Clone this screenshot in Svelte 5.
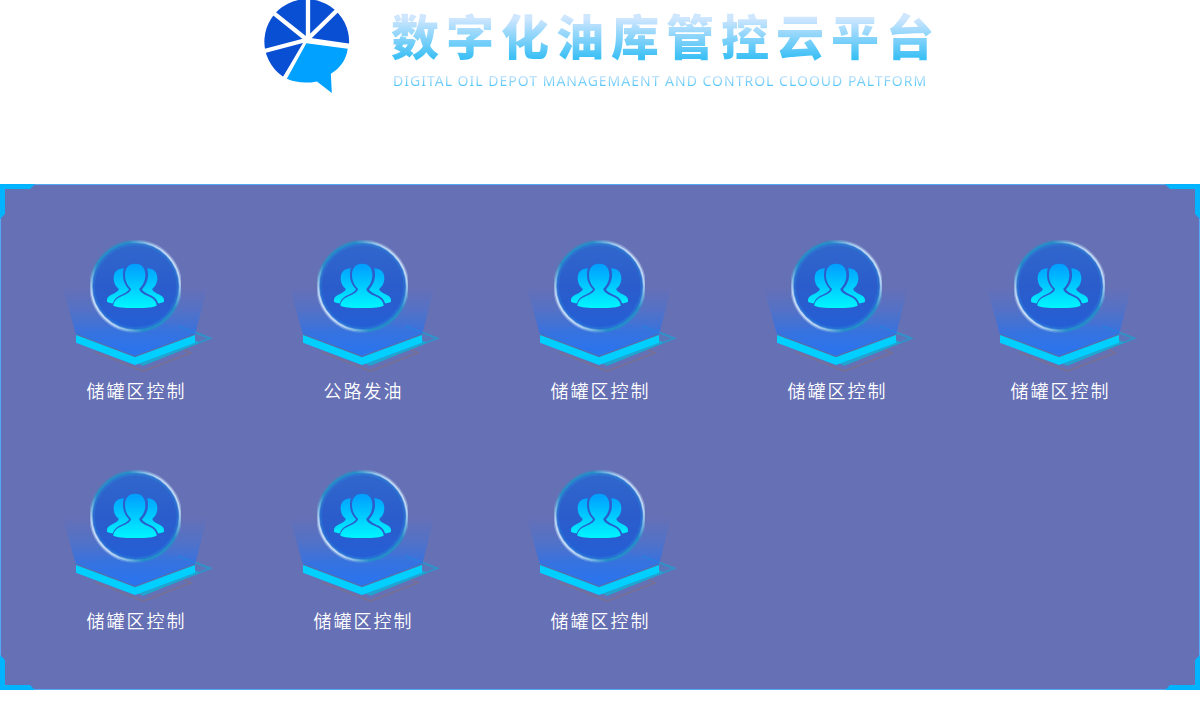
<script>
  const modules = [
    '储罐区控制', '公路发油', '储罐区控制', '储罐区控制', '储罐区控制',
    '储罐区控制', '储罐区控制', '储罐区控制'
  ];
</script>

<svelte:head><title>数字化油库管控云平台</title></svelte:head>

<svg class="defs" width="0" height="0" aria-hidden="true">
  <defs>
    <linearGradient id="beam" x1="0" y1="0" x2="0" y2="1">
      <stop offset="0" stop-color="#2b72ee" stop-opacity="0" />
      <stop offset=".3" stop-color="#2f74e6" stop-opacity=".3" />
      <stop offset=".65" stop-color="#2b72ea" stop-opacity=".78" />
      <stop offset="1" stop-color="#2874f2" />
    </linearGradient>
    <linearGradient id="disc" x1="0" y1="0" x2="0" y2="1">
      <stop offset="0" stop-color="#3068cc" />
      <stop offset=".5" stop-color="#2b5ccb" />
      <stop offset="1" stop-color="#245fd6" />
    </linearGradient>
    <linearGradient id="ring" x1="0" y1=".85" x2="1" y2=".15">
      <stop offset="0" stop-color="#e4eefc" />
      <stop offset=".14" stop-color="#b4d2f4" />
      <stop offset=".32" stop-color="#2391c8" />
      <stop offset=".68" stop-color="#2391c8" />
      <stop offset=".86" stop-color="#b4d2f4" />
      <stop offset="1" stop-color="#e4eefc" />
    </linearGradient>
    <linearGradient id="people" gradientUnits="userSpaceOnUse" x1="0" y1="101" x2="0" y2="234">
      <stop offset="0" stop-color="#009dff" />
      <stop offset="1" stop-color="#00f6ff" />
    </linearGradient>
    <clipPath id="discClip"><rect x="90" y="28" width="273" height="282" /></clipPath>
    <symbol id="module" viewBox="-12 15 480 420">
      <path d="M48 318 250 262 455 325 250 407Z" fill="#2e8bd0" fill-opacity=".2" />
      <path d="M355 288 451 325 250 403" fill="none" stroke="#1e9fd0" stroke-width="6" stroke-opacity=".7" />
      <path d="M225 397 250 407 420 338 405 330Z" fill="#1ca9d2" fill-opacity=".85" />
      <path d="M105 366 250 423 393 368 372 360" fill="none" stroke="#777094" stroke-width="5" />
      <path d="M8 172H442L405 314 225 381 48 314Z" fill="url(#beam)" />
      <path d="M48 313 225 379 405 313" fill="none" stroke="#58709e" stroke-width="3" />
      <path d="M48 315 225 382 405 315V338L225 405 48 338Z" fill="#00cfff" />
      <g clip-path="url(#discClip)">
        <circle cx="227" cy="169" r="134" fill="url(#disc)" />
        <circle cx="227" cy="169" r="127" fill="none" stroke="#2b91da" stroke-width="9" stroke-opacity=".3" />
        <circle cx="227" cy="169" r="134" fill="none" stroke="url(#ring)" stroke-width="11" stroke-opacity=".4" />
        <circle cx="227" cy="169" r="133" fill="none" stroke="url(#ring)" stroke-width="5" />
      </g>
      <g fill="url(#people)">
        <path d="M192 115c-20 0-31 12-31 29 0 14 6 26 15 32 1 6-8 11-19 17-10 5-16 10-16 16v6c5 3 11 4 18 5 3-14 14-21 30-28 9-4 15-8 18-14-13-13-19-31-18-45 0-8 1-14 3-18Z" />
        <path d="M261 115c20 0 31 12 31 29 0 14-6 26-15 32-1 6 8 11 19 17 10 5 16 10 16 16v6c-5 3-11 4-18 5-3-14-14-21-30-28-9-4-15-8-18-14 13-13 19-31 18-45 0-8-1-14-3-18Z" />
        <path d="M226 101c-21 0-31 14-31 34 0 17 7 32 18 41 0 9-12 15-27 22-16 7-25 15-26 29 10 5 29 7 66 7s54-2 64-7c-1-14-10-22-26-29-15-7-26-13-26-22 11-9 18-24 18-41 0-20-10-34-30-34Z" />
      </g>
    </symbol>
  </defs>
</svg>

<header>
  <svg class="logo" viewBox="15 0 290 290" aria-hidden="true">
    <path d="M160 118 287 133A128 128 0 1 0 88 232Z" fill="#094fd3" />
    <path d="M163 118V-10M160 120 50 32M160 120 258 24M160 120 20 157M160 120 300 140M160 122 86 248" stroke="#fff" stroke-width="13" fill="none" />
    <path d="M158 131 283 147Q277 194 232 223L235 281 190 246Q140 256 99 238Z" fill="#00a1ff" />
  </svg>
  <div class="brand">
    <h1>数字化油库管控云平台</h1>
    <p>DIGITAL OIL DEPOT MANAGEMAENT AND CONTROL CLOOUD PALTFORM</p>
  </div>
</header>

<main>
  <svg class="corner tl" viewBox="0 0 35 35" aria-hidden="true"><path d="M0 0H35L30 5H5V30L0 35Z" /></svg>
  <svg class="corner tr" viewBox="0 0 35 35" aria-hidden="true"><path d="M0 0H35L30 5H5V30L0 35Z" /></svg>
  <svg class="corner bl" viewBox="0 0 35 35" aria-hidden="true"><path d="M0 0H35L30 5H5V30L0 35Z" /></svg>
  <svg class="corner br" viewBox="0 0 35 35" aria-hidden="true"><path d="M0 0H35L30 5H5V30L0 35Z" /></svg>
  <nav>
    {#each modules as name}
      <a href="#module">
        <svg class="art" aria-hidden="true"><use href="#module" /></svg>
        <span>{name}</span>
      </a>
    {/each}
  </nav>
</main>

<style>
  :global(body) {
    margin: 0;
    background: #fff;
    font-family: "Noto Sans CJK SC", sans-serif;
  }
  .defs { position: absolute; }
  header {
    display: flex;
    justify-content: center;
    gap: 36px;
    height: 184px;
  }
  .logo { width: 96px; height: 96px; flex: none; }
  .brand { padding-top: 6px; }
  h1, p {
    margin: 0;
    white-space: nowrap;
    color: transparent;
    -webkit-background-clip: text;
    background-clip: text;
  }
  h1 {
    font-size: 48px;
    font-weight: 900;
    line-height: 56px;
    letter-spacing: 7px;
    background-image: linear-gradient(#cfe6ff 22%, #3dc0f5 92%);
  }
  p {
    padding: 9px 0 0 2px;
    font-family: "Noto Sans", "Open Sans", sans-serif;
    font-size: 14px;
    line-height: 20px;
    letter-spacing: 1px;
    background-image: linear-gradient(#cfe6ff 45%, #3dc0f5 88%);
  }
  main {
    position: relative;
    background: #6670b5;
    border: 1px solid #55a8f5;
  }
  .corner {
    position: absolute;
    width: 35px;
    height: 35px;
    fill: #00b4ff;
  }
  .tl { top: -1px; left: -1px; }
  .tr { top: -1px; right: -1px; transform: scaleX(-1); }
  .bl { bottom: -1px; left: -1px; transform: scaleY(-1); }
  .br { bottom: -1px; right: -1px; transform: scale(-1); }
  nav {
    display: grid;
    grid-template-columns: 217fr 237fr 237fr 237fr 209fr;
    row-gap: 63px;
    padding: 50px 35px 57px 26px;
  }
  a {
    display: flex;
    flex-direction: column;
    align-items: center;
    gap: 3px;
    color: #fff;
    text-decoration: none;
  }
  .art { width: 160px; height: 140px; }
  span {
    padding-left: 2px;
    font-size: 18px;
    font-weight: 350;
    line-height: 24px;
    letter-spacing: 2px;
  }
</style>
